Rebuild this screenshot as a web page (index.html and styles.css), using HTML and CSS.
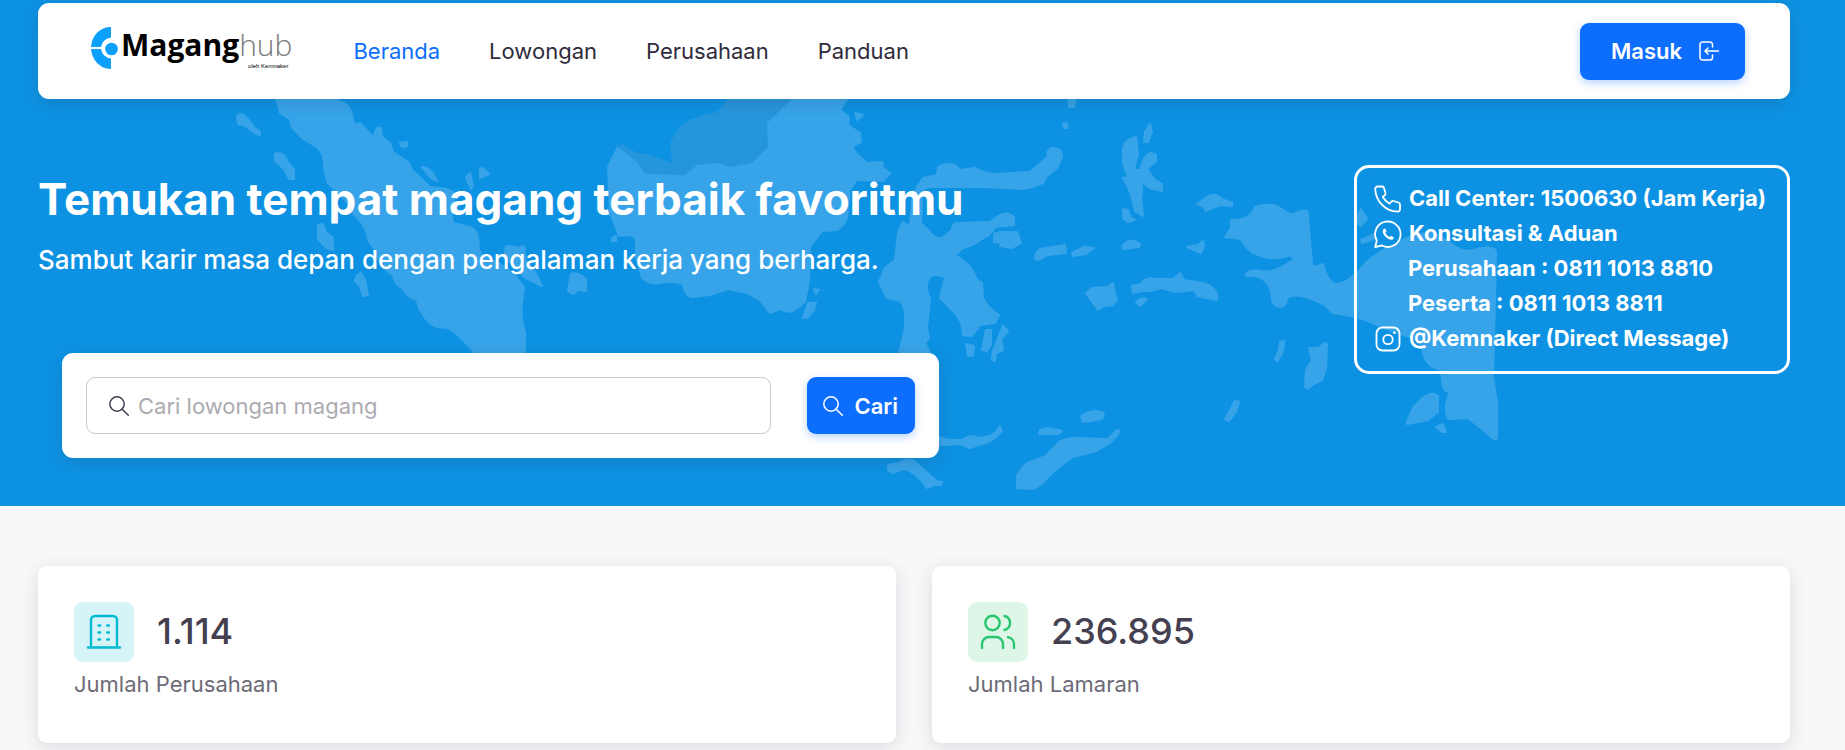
FILE: index.html
```html
<!DOCTYPE html>
<html lang="id">
<head>
<meta charset="utf-8">
<meta name="viewport" content="width=device-width, initial-scale=1">
<title>Maganghub</title>
<link rel="stylesheet" href="styles.css">
</head>
<body>
<div class="hero">
  <svg class="hero-map" viewBox="0 0 1845 506" preserveAspectRatio="xMidYMin slice" aria-hidden="true">
    <g class="land">
      <!-- Sumatra -->
      <path d="M273 90 278 104 280 113 290 119 292 127 302 138 318 148 323 155 325 173 328 183 345 200 353 213 362 223 367 233 368 240 375 250Q380 268 393 275Q394 284 402 288Q408 298 417 300 418 308 422 313Q428 324 437 327L448 328 458 335 475 353 520 400 525 353 525 333Q520 315 522 303L524 287 512 272 497 262 482 256 479 250 478 237Q477 230 470 227L453 223 452 214 455 207 453 192 447 189 430 187 412 170 408 162 393 152 390 143 382 137 381 128 377 128 373 137 360 123 354 125Q352 109 347 105L335 99 330 90Z"/>
      <path d="M237 116Q240 112 245 116L254 127 260 132 260 135 254 133 246 126 238 124Z"/>
      <path d="M275 154Q280 151 285 157L289 164 294 169 294 179 289 179 284 169 275 161Z"/>
      <path d="M318 225 323 224 326 232 333 238 333 250 326 248 318 239Z"/>
      <path d="M357 275 361 273 365 280 368 295 363 296 360 286 355 281Z"/>
      <path d="M400 143 407 142 407 146 402 147Z"/><path d="M422 167Q431 167 437 181L431 178Z"/>
      <path d="M466 177 470 173 473 186 471 189Z"/><path d="M480 168 484 169 489 174 480 178Z"/>
      <path d="M506 247 511 246 518 248 524 246 526 261 534 270 542 286 524 277 514 265 504 258Z"/>
      <path d="M571 274Q577 271 586 279V291L578 290 573 294 568 291Z"/>
      <!-- Kalimantan -->
      <path d="M795 90 792 99 767 123 768 147 752 163 730 167 717 163 697 165 685 175 645 174 637 162 618 147 608 167 609 187 610 213 615 225 619 236 632 235 636 240 636 257 642 278Q650 285 660 283Q673 280 683 284 685 296 692 297L710 295 728 289 747 293 760 300 770 313 780 309Q788 313 793 311L805 302 809 280 810 247 822 231 837 230Q846 224 847 217L850 190 857 180 883 181 890 173 883 168 882 162 867 163 858 155 852 147 861 142 860 133 848 125 849 117 840 110 847 99 845 90Z"/>
      <path d="M612 238 616 236 616 241 612 241Z"/><path d="M855 113 863 115 857 120Z"/>
      <path d="M808 303 816 303 814 310 807 318 803 318Z"/><path d="M814 289 819 290 816 294Z"/>
      <!-- Sulawesi -->
      <path d="M912 200 917 187 923 178 937 175 938 167Q953 160 960 170L975 168Q986 174 997 174L1030 172 1048 157Q1046 148 1054 148 1062 148 1062 157L1057 168 1047 176 1043 183Q1034 187 1023 189L983 187 928 187Q921 190 922 197L921 223 928 230Q936 240 942 238L952 230Q952 223 958 223L990 222 1000 215Q1008 211 1014 217L1014 225 995 227Q991 235 985 237Q970 248 963 248L955 255Q974 266 976 279L982 283 983 298Q989 310 999 315L995 323 980 325 972 336 963 335Q963 320 952 310L940 298 945 277 937 275Q926 274 927 290L930 300 927 328 929 338 925 343 930 353 925 370 890 370 899 353 905 328V313Q903 300 896 300L887 298 879 282 885 268 895 260 898 233 903 222 910 227Z"/>
      <path d="M994 234 1000 232 1017 232 1021 243 1012 248 1000 246 1002 243 994 242Z"/>
      <path d="M1036 253 1040 249 1065 245 1066 253 1048 255 1039 260 1035 259Z"/>
      <path d="M1072 253 1084 247 1094 248 1086 254 1073 256Z"/>
      <path d="M986 330 991 330 991 345 987 351 982 350Z"/><path d="M966 344 974 346 973 356 968 356Z"/>
      <path d="M1003 326 1008 331 1001 339 1003 350 996 353 995 361 992 360 993 351Z"/>
      <path d="M1068 95 1076 96 1074 107 1069 107Z"/><path d="M1063 124 1067 123 1067 128 1064 128Z"/>
      <!-- Maluku -->
      <path d="M1123 148Q1126 138 1136 137L1138 153 1134 170 1140 170Q1144 154 1151 153L1156 155V161L1147 169 1154 179 1162 184 1162 191 1150 188 1141 182Q1143 190 1141 197L1143 216 1135 211Q1132 192 1123 178L1128 177 1123 163Z"/>
      <path d="M1150 124 1152 132 1148 142 1144 142 1145 132Z"/>
      <path d="M1123 209 1128 210 1130 217 1135 220 1128 222 1123 218Z"/>
      <path d="M1122 247Q1129 236 1140 244L1139 247 1124 249Z"/>
      <path d="M1197 204 1207 197Q1215 192 1222 199L1232 203 1232 206 1220 205 1210 209 1206 211 1203 206Z"/>
      <path d="M1187 247 1198 245 1203 241 1204 246 1201 253Z"/>
      <path d="M1086 293 1092 288 1107 287 1113 283 1115 294 1117 300 1113 305 1104 306 1098 310Z"/>
      <path d="M1132 286 1141 284Q1146 276 1156 279L1173 279 1180 273 1184 280 1203 283Q1214 286 1217 294L1217 300 1197 296 1195 290 1175 292 1162 288 1150 291 1142 291 1133 293Z"/>
      <path d="M1136 302 1142 298 1147 299 1140 306Z"/>
      <path d="M1280 342 1284 341Q1284 354 1277 361L1275 359 1279 350Z"/>
      <path d="M1309 348 1318 348 1325 343 1327 344 1326 368 1322 380 1312 385 1308 389 1305 387 1306 370 1312 360Z"/>
      <path d="M1235 401 1239 402 1236 412 1229 421 1225 419Z"/>
      <!-- Nusa Tenggara -->
      <path d="M930 435 950 440 963 440Q970 433 978 438L990 436Q997 433 1000 426L1002 431Q993 443 978 445L970 448 960 444 930 446Z"/>
      <path d="M888 465 900 463Q907 457 914 461L930 475 936 481 942 482 941 485 934 485 927 488 922 481Q910 469 903 469L893 473 888 470Z"/>
      <path d="M1081 416Q1094 408 1104 413L1102 419 1083 422Z"/><path d="M1040 430 1048 428 1062 431 1058 434 1039 434Z"/>
      <path d="M1017 488V476Q1024 463 1030 462L1046 456 1059 442Q1066 438 1074 438L1108 439 1117 430Q1123 430 1110 443L1096 451 1073 457Q1066 461 1050 475 1040 488 1032 489Z"/>
      <!-- Papua -->
      <path d="M1225 237 1231 228V220Q1252 220 1255 207Q1272 202 1280 208 1292 217 1296 213 1308 207 1308 215L1310 240 1312 265 1316 267 1323 264Q1328 284 1337 284 1346 283 1358 272Q1370 255 1395 245 1410 233 1430 233 1442 236 1453 245 1464 253 1474 250 1496 244 1496 253L1495 300 1493 377 1497 403V438Q1494 441 1488 434L1468 418 1448 419Q1443 408 1450 392 1443 393 1442 380L1441 370Q1424 367 1422 347 1418 338 1400 334L1377 325Q1363 317 1333 313L1325 305Q1294 290 1287 299 1286 307 1280 307 1272 306 1272 298 1270 274 1246 276 1247 269 1260 271 1274 274 1293 260 1295 255 1287 256 1273 262 1253 253 1244 246 1241 239Z"/>
      <path d="M1361 209 1367 219 1361 226 1355 222Z"/><path d="M1361 240 1374 234 1376 238 1362 243Z"/>
      <path d="M1407 422 1413 408Q1430 388 1438 396V412L1428 420 1418 422 1407 424Z"/>
      <path d="M1436 427 1443 424 1446 432 1442 432Z"/>
    </g>
    <path class="land-neighbour" d="M727 90 727 99Q720 114 707 114L687 121 680 127 670 143 672 163 647 154 637 153 623 144 618 147 637 162 645 174 685 175 697 165 717 163 730 167 752 163 768 147 767 123 792 99 795 90Z"/>
  </svg>

  <header class="navbar">
    <a class="brand" href="#" aria-label="Maganghub oleh Kemnaker">
      <svg class="brand-mark" viewBox="0 0 27 42" aria-hidden="true">
        <path d="M20 0v10.500A11 11 0 0 0 10 20H0C1 8 9 0 20 0ZM0 22h10a11 11 0 0 0 10 9.500V42C9 42 1 33 0 22Z"/>
        <circle cx="20.500" cy="22" r="6.300"/>
      </svg>
      <span class="brand-text">
        <span class="brand-name"><b>Magang</b><span>hub</span></span>
        <small>oleh Kemnaker</small>
      </span>
    </a>
    <nav class="menu">
      <a class="active" href="#">Beranda</a>
      <a href="#">Lowongan</a>
      <a href="#">Perusahaan</a>
      <a href="#">Panduan</a>
    </nav>
    <button class="btn btn-login" type="button">Masuk
      <svg class="icon-login" viewBox="0 0 20 20" aria-hidden="true"><path d="M13.500 6V3.500a2.500 2.500 0 0 0-2.500-2.500H3.500A2.500 2.500 0 0 0 1 3.500v13A2.500 2.500 0 0 0 3.500 19H11a2.500 2.500 0 0 0 2.500-2.500V14M19.500 10H6M9 7l-3 3 3 3"/></svg>
    </button>
  </header>

  <div class="hero-body">
    <section class="intro">
      <h1>Temukan tempat magang terbaik favoritmu</h1>
      <p>Sambut karir masa depan dengan pengalaman kerja yang berharga.</p>
      <form class="search">
        <label class="field">
          <svg class="icon-search" viewBox="0 0 20 20" aria-hidden="true"><circle cx="8" cy="8" r="7.200"/><path d="M13.200 13.200 19.300 19.300"/></svg>
          <input type="text" placeholder="Cari lowongan magang" aria-label="Cari lowongan magang">
        </label>
        <button class="btn btn-search" type="submit">
          <svg class="icon-search" viewBox="0 0 20 20" aria-hidden="true"><circle cx="8" cy="8" r="7.200"/><path d="M13.200 13.200 19.300 19.300"/></svg>
          Cari</button>
      </form>
    </section>
    <ul class="contact">
      <li><svg viewBox="0 0 28 28" aria-hidden="true"><path d="M3.500 1.500H8a2 2 0 0 1 2 1.500l1.500 5.200a2 2 0 0 1-.7 2L8.800 12a18 18 0 0 0 6.700 6.700l2-2.200a2 2 0 0 1 2-.5l5 1.500a2 2 0 0 1 1.500 2V24a2.500 2.500 0 0 1-2.500 2.700C11.500 26.500 1.800 16.500 1.200 4A2.400 2.400 0 0 1 3.500 1.500Z"/></svg>Call Center: 1500630 (Jam Kerja)</li>
      <li><svg viewBox="0 0 28 28" aria-hidden="true"><path d="M1.200 27 2.800 20.500A12.700 12.700 0 1 1 8 25.500Z"/><path class="solid" d="M9.300 9.200c1-1 2-.8 2.500.3l.5 1.600c.2.700-.7 1.200-.8 1.900.6 1.700 2.200 3.200 3.700 3.800.7 0 1.300-1 2-.8l2.200 1c.6.5.1 1.900-.8 2.400-1.300.8-4 .1-6.600-2.200-2.800-2.500-4-5.600-2.700-8Z"/></svg>Konsultasi &amp; Aduan</li>
      <li class="sub">Perusahaan : 0811 1013 8810</li>
      <li class="sub">Peserta : 0811 1013 8811</li>
      <li><svg viewBox="0 0 28 28" aria-hidden="true"><rect x="2.500" y="2.500" width="23" height="23" rx="6"/><circle cx="14" cy="14.500" r="4.700"/><circle class="solid" cx="20.300" cy="7.700" r="1.300"/></svg>@Kemnaker (Direct Message)</li>
    </ul>
  </div>
</div>

<main class="stats">
  <article class="card">
    <div class="card-head">
      <span class="tile tile-cyan"><svg viewBox="0 0 34 34" aria-hidden="true"><path d="M1 32.500h32M4 32V5a4 4 0 0 1 4-4h18a4 4 0 0 1 4 4v27"/><path d="M11.500 10.500h1.600M20.300 10.500h1.600M11.500 17.500h1.600M20.300 17.500h1.600M11.500 24.500h1.600M20.300 24.500h1.600"/></svg></span>
      <strong>1.114</strong>
    </div>
    <p>Jumlah Perusahaan</p>
  </article>
  <article class="card">
    <div class="card-head">
      <span class="tile tile-green"><svg viewBox="0 0 34 34" aria-hidden="true"><circle cx="11.500" cy="8" r="7.200"/><path d="M1 33v-4a7 7 0 0 1 7-7h7a7 7 0 0 1 7 7v4M23.500 1a7.200 7.200 0 0 1 0 14M33 33v-4a7 7 0 0 0-6-6.800"/></svg></span>
      <strong>236.895</strong>
    </div>
    <p>Jumlah Lamaran</p>
  </article>
</main>
</body>
</html>
```
FILE: styles.css
```css
* { box-sizing: border-box; }

body {
  margin: 0;
  background: #f8f8fa;
  color: #444050;
  font-family: Inter, "Open Sans", sans-serif;
  font-size: 22px;
  line-height: 34px;
}

.hero {
  position: relative;
  padding: 3px 55px 48px 38px;
  background: #0d92e3;
  overflow: hidden;
}

.hero-map {
  position: absolute;
  inset: 0;
  width: 100%;
  height: 100%;
}

.land {
  fill: #37a4e9;
  stroke: #37a4e9;
  stroke-width: 2;
  stroke-linejoin: round;
}

.land-neighbour { fill: #2696dc; }

.navbar {
  position: relative;
  display: flex;
  align-items: center;
  min-height: 96px;
  padding: 0 45px 0 53px;
  border-radius: 11px;
  background: #fff;
  box-shadow: 0 4px 16px rgba(47, 43, 61, 0.18);
}

.brand {
  display: flex;
  gap: 3px;
  padding-bottom: 6px;
  color: #000;
  text-decoration: none;
}

.brand-mark {
  width: 27px;
  height: 42px;
  fill: #0aa0fb;
}

.brand-text {
  display: flex;
  flex-direction: column;
  align-items: flex-end;
}

.brand-name {
  font-family: "Open Sans", sans-serif;
  font-size: 30px;
  line-height: 36px;
}

.brand-name span { color: #7a7a7a; font-weight: 300; }

.brand-text small {
  padding-right: 4px;
  font-family: "Liberation Sans", sans-serif;
  font-size: 6px;
  line-height: 6px;
}

.menu {
  display: flex;
  gap: 49px;
  margin-left: 61px;
}

.menu a { color: #2f2b3d; text-decoration: none; }
.menu .active { color: #0d6efd; }

.btn {
  display: inline-flex;
  align-items: center;
  justify-content: center;
  height: 57px;
  border: 0;
  border-radius: 9px;
  background: #0d6efd;
  box-shadow: 0 3px 9px rgba(13, 110, 253, 0.3);
  color: #fff;
  font: 600 22px/34px Inter, "Open Sans", sans-serif;
}

.btn svg { stroke: #fff; }

.btn-login {
  gap: 17px;
  margin-left: auto;
  padding: 0 26px 0 31px;
}

.icon-login,
.icon-search {
  width: 20px;
  height: 20px;
  fill: none;
  stroke-width: 1.500;
  stroke-linecap: round;
  stroke-linejoin: round;
}

.hero-body {
  position: relative;
  display: flex;
  align-items: flex-start;
  justify-content: space-between;
  padding-top: 66px;
}

h1 {
  margin: 0;
  color: #fff;
  font-size: 44px;
  line-height: 68px;
}

.intro p {
  margin: 6px 0 0;
  color: #fff;
  font-size: 26px;
  font-weight: 500;
  line-height: 42px;
}

.search {
  display: flex;
  gap: 36px;
  width: 877px;
  margin: 72px 0 0 24px;
  padding: 24px;
  border-radius: 11px;
  background: #fff;
  box-shadow: 0 4px 16px rgba(47, 43, 61, 0.18);
}

.field {
  display: flex;
  flex: 1;
  align-items: center;
  gap: 9px;
  height: 57px;
  padding: 0 22px;
  border: 1px solid #c9c8cd;
  border-radius: 9px;
}

.field svg { stroke: #444050; }

.field input {
  flex: 1;
  min-width: 0;
  padding: 0;
  border: 0;
  outline: 0;
  background: none;
  color: #444050;
  font: inherit;
}

.field input::placeholder { color: #acaab1; opacity: 1; }

.btn-search { gap: 11px; padding: 0 17px 0 16px; }

.contact {
  margin: 0;
  padding: 13px 21px 15px 17px;
  border: 3px solid #fff;
  border-radius: 15px;
  color: #fff;
  font-weight: 700;
  line-height: 35px;
  list-style: none;
}

.contact li { display: flex; align-items: center; gap: 7px; }
.contact .sub { padding-left: 34px; }

.contact svg {
  width: 28px;
  height: 28px;
  fill: none;
  stroke: #fff;
  stroke-width: 1.800;
  stroke-linejoin: round;
}

.contact .solid { fill: #fff; stroke: none; }

.stats {
  display: grid;
  grid-template-columns: 1fr 1fr;
  gap: 36px;
  padding: 60px 55px 7px 38px;
}

.card {
  min-height: 177px;
  padding: 36px;
  border-radius: 9px;
  background: #fff;
  box-shadow: 0 4px 18px rgba(47, 43, 61, 0.14);
}

.card-head { display: flex; align-items: center; gap: 23px; }
.card strong { padding-bottom: 2px; font-size: 36px; font-weight: 500; line-height: 54px; }
.card p { margin: 5px 0 0; color: #6d6b77; }

.tile {
  display: grid;
  place-items: center;
  width: 60px;
  height: 60px;
  border-radius: 9px;
}

.tile svg {
  width: 34px;
  height: 34px;
  fill: none;
  stroke: currentColor;
  stroke-width: 2.400;
  stroke-linecap: round;
  stroke-linejoin: round;
  overflow: visible;
}

.tile-cyan { background: #d6f4f8; color: #00bad1; }
.tile-green { background: #ddf6e8; color: #28c76f; }
```
